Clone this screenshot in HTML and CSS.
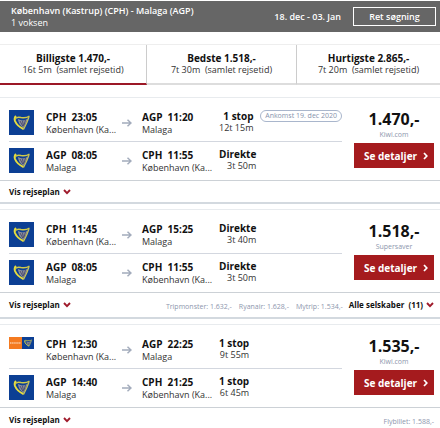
FILE: index.html
```
<!DOCTYPE html>
<html lang="da">
<head>
<meta charset="utf-8">
<meta name="viewport" content="width=device-width, initial-scale=1">
<title>København - Malaga</title>
<link rel="stylesheet" href="styles.css">
</head>
<body>
<svg class="defs" aria-hidden="true">
  <symbol id="harp" viewBox="0 0 25 25">
    <rect width="25" height="25" fill="#0c3f94"/>
    <path d="M9 9 Q14 12 19 8.500 L14.500 18 Q9 14 9 9Z" fill="#8d8f9c"/>
    <path d="M11 11 L14 16.500 M13.500 11 L14.500 16 M16.500 10 L15 15" stroke="#3c3f68" stroke-width=".8"/>
    <path d="M7 8.500 Q8 6.500 12 7.500 Q17 8.500 20.500 6" fill="none" stroke="#cfc94a" stroke-width="1.500"/>
    <path d="M7 6 Q5 8 6 11 Q8 16 14.500 19" fill="none" stroke="#e6dc3e" stroke-width="2"/>
    <path d="M20 7 Q18 13 14.500 19.500" fill="none" stroke="#c9c25a" stroke-width="1.300"/>
  </symbol>
  <symbol id="arrow" viewBox="0 0 10 8">
    <path d="M0 4H9M5.500 .8L9 4L5.500 7.200" fill="none" stroke="#a3acbc" stroke-width="1.500"/>
  </symbol>
  <symbol id="down" viewBox="0 0 8 6">
    <path d="M1 1L4 4.200L7 1" fill="none" stroke="#9f1a2b" stroke-width="1.900"/>
  </symbol>
  <symbol id="right" viewBox="0 0 5 8">
    <path d="M1 1L3.800 4L1 7" fill="none" stroke="#fff" stroke-width="1.700"/>
  </symbol>
</svg>

<header class="bar">
  <div class="trip">
    <h1>København (Kastrup) (CPH) - Malaga (AGP)</h1>
    <p>1 voksen</p>
  </div>
  <span class="dates">18. dec - 03. Jan</span>
  <button class="edit" type="button">Ret søgning</button>
</header>

<nav class="tabs">
  <button class="tab active" type="button"><b>Billigste 1.470,-</b><span>16t 5m &nbsp;(samlet rejsetid)</span></button>
  <button class="tab" type="button"><b>Bedste 1.518,-</b><span>7t 30m &nbsp;(samlet rejsetid)</span></button>
  <button class="tab" type="button"><b>Hurtigste 2.865,-</b><span>7t 20m &nbsp;(samlet rejsetid)</span></button>
</nav>

<main>
  <article class="card">
    <div class="offer">
      <div class="legs">
        <div class="leg">
          <svg class="logo"><use href="#harp"/></svg>
          <div class="stop"><b>CPH &nbsp;23:05</b><span>København (Ka...</span></div>
          <svg class="arrow"><use href="#arrow"/></svg>
          <div class="stop"><b>AGP &nbsp;11:20</b><span>Malaga</span></div>
          <div class="time"><b>1 stop</b><span>12t 15m</span></div>
          <span class="badge">Ankomst 19. dec 2020</span>
        </div>
        <div class="leg">
          <svg class="logo"><use href="#harp"/></svg>
          <div class="stop"><b>AGP &nbsp;08:05</b><span>Malaga</span></div>
          <svg class="arrow"><use href="#arrow"/></svg>
          <div class="stop"><b>CPH &nbsp;11:55</b><span>København (Ka...</span></div>
          <div class="time"><b>Direkte</b><span>3t 50m</span></div>
        </div>
      </div>
      <div class="price">
        <strong>1.470,-</strong><small>Kiwi.com</small>
        <a class="details" href="#">Se detaljer<svg><use href="#right"/></svg></a>
      </div>
    </div>
    <footer class="foot">
      <button class="toggle" type="button">Vis rejseplan<svg><use href="#down"/></svg></button>
    </footer>
  </article>

  <article class="card">
    <div class="offer">
      <div class="legs">
        <div class="leg">
          <svg class="logo"><use href="#harp"/></svg>
          <div class="stop"><b>CPH &nbsp;11:45</b><span>København (Ka...</span></div>
          <svg class="arrow"><use href="#arrow"/></svg>
          <div class="stop"><b>AGP &nbsp;15:25</b><span>Malaga</span></div>
          <div class="time"><b>Direkte</b><span>3t 40m</span></div>
        </div>
        <div class="leg">
          <svg class="logo"><use href="#harp"/></svg>
          <div class="stop"><b>AGP &nbsp;08:05</b><span>Malaga</span></div>
          <svg class="arrow"><use href="#arrow"/></svg>
          <div class="stop"><b>CPH &nbsp;11:55</b><span>København (Ka...</span></div>
          <div class="time"><b>Direkte</b><span>3t 50m</span></div>
        </div>
      </div>
      <div class="price">
        <strong>1.518,-</strong><small>Supersaver</small>
        <a class="details" href="#">Se detaljer<svg><use href="#right"/></svg></a>
      </div>
    </div>
    <footer class="foot tall">
      <button class="toggle" type="button">Vis rejseplan<svg><use href="#down"/></svg></button>
      <div class="others"><span>Tripmonster: 1.632,-</span><span>Ryanair: 1.628,-</span><span>Mytrip: 1.534,-</span></div>
      <button class="toggle" type="button">Alle selskaber &nbsp;(11)<svg><use href="#down"/></svg></button>
    </footer>
  </article>

  <article class="card">
    <div class="offer">
      <div class="legs">
        <div class="leg">
          <svg class="logo" viewBox="0 0 25 25">
            <rect width="13" height="12" fill="#f47a20"/>
            <path d="M1 6H12" stroke="#fbc9a0" stroke-width="1.500" stroke-dasharray="1.500 .6"/>
            <use href="#harp" x="13" width="12" height="12"/>
          </svg>
          <div class="stop"><b>CPH &nbsp;12:30</b><span>København (Ka...</span></div>
          <svg class="arrow"><use href="#arrow"/></svg>
          <div class="stop"><b>AGP &nbsp;22:25</b><span>Malaga</span></div>
          <div class="time"><b>1 stop</b><span>9t 55m</span></div>
        </div>
        <div class="leg">
          <svg class="logo"><use href="#harp"/></svg>
          <div class="stop"><b>AGP &nbsp;14:40</b><span>Malaga</span></div>
          <svg class="arrow"><use href="#arrow"/></svg>
          <div class="stop"><b>CPH &nbsp;21:25</b><span>København (Ka...</span></div>
          <div class="time"><b>1 stop</b><span>6t 45m</span></div>
        </div>
      </div>
      <div class="price">
        <strong>1.535,-</strong><small>Kiwi.com</small>
        <a class="details" href="#">Se detaljer<svg><use href="#right"/></svg></a>
      </div>
    </div>
    <footer class="foot tall">
      <button class="toggle" type="button">Vis rejseplan<svg><use href="#down"/></svg></button>
      <div class="others last"><span>Flybillet: 1.588,-</span></div>
    </footer>
  </article>
</main>
</body>
</html>
```
FILE: styles.css
```
* { box-sizing: border-box; }
body {
  margin: 0;
  padding-top: 1px;
  overflow: hidden;
  background: #fff;
  color: #111;
  font-family: "Open Sans", sans-serif;
  font-size: 10px;
  line-height: 12px;
}
button { font: inherit; color: inherit; cursor: pointer; }
h1, p { margin: 0; }
.defs { position: absolute; width: 0; height: 0; }

.bar {
  display: flex;
  align-items: center;
  height: 31px;
  padding: 0 4px 0 11px;
  background: #666;
  color: #fff;
}
.trip { flex: 1; white-space: nowrap; }
.trip h1 { font-size: 9px; line-height: 12px; font-weight: 600; }
.trip p { font-size: 9px; line-height: 12px; }
.dates { font-size: 9px; font-weight: 600; margin-right: 12px; }
.edit {
  width: 83px;
  height: 19px;
  padding: 0;
  border: 1px solid #fff;
  background: none;
  font-size: 9px;
  font-weight: 600;
}

.tabs {
  display: grid;
  grid-template-columns: 147fr 150fr 143fr;
  margin-top: 12px;
  border-top: 1px solid #eee;
}
.tab {
  height: 40px;
  padding: 0;
  border: 0;
  border-right: 1px solid #ccc;
  border-bottom: 2px solid #ddd;
  background: none;
  text-align: center;
}
.tab:last-child { border-right: 0; }
.tab.active { border-bottom-color: #9c1826; }
.tab b, .tab span { display: block; }
.tab b { font-size: 10px; }
.tab span { font-size: 9px; line-height: 12px; color: #333; }

main { display: grid; gap: 5px; margin-top: 12px; }
.card { border-top: 1px solid #e8ebee; border-bottom: 2px solid #d3d9df; }
.card:last-child { border-bottom: 0; }
.offer { display: flex; gap: 12px; padding: 6px 6px 0 9px; border-bottom: 1px solid #ccd1d6; }
.legs { flex: 1; }
.leg {
  display: grid;
  grid-template-columns: 25px 76px 14px 71px auto 1fr;
  column-gap: 6px;
  height: 37px;
  padding-top: 6px;
}
.leg + .leg { height: 39px; border-top: 1px solid #d3d7df; }
.logo { width: 25px; height: 25px; }
.leg .stop:nth-child(2) { margin-left: 6px; }
.arrow { width: 10px; height: 8px; margin-top: 9px; }
.stop, .time { white-space: nowrap; }
.stop b, .stop span, .time b, .time span { display: block; }
.stop b { line-height: 14px; }
.stop span, .time span { font-size: 9px; line-height: 12px; color: #333; }
.time { text-align: right; }
.time b { line-height: 12px; }
.badge {
  justify-self: end;
  height: 12px;
  padding: 0 4px;
  border: 1px solid #a9b6cc;
  border-radius: 6px;
  color: #8793ad;
  font-size: 7px;
  line-height: 10px;
  white-space: nowrap;
}
.price { width: 80px; padding-top: 4px; text-align: center; }
.price strong, .price small { display: block; }
.price strong { font-size: 16px; line-height: 22px; }
.price small { font-size: 7px; line-height: 10px; color: #8d96ad; }
.details {
  display: flex;
  align-items: center;
  justify-content: center;
  gap: 6px;
  height: 25px;
  margin-top: 3px;
  padding-left: 4px;
  background: #a51b1e;
  color: #fff;
  font-weight: 700;
  text-decoration: none;
}
.details svg { width: 5px; height: 8px; }

.foot { display: flex; align-items: center; height: 21px; padding: 0 6px 0 9px; }
.foot.tall { height: 24px; }
.toggle {
  display: flex;
  align-items: center;
  gap: 3px;
  padding: 0;
  border: 0;
  background: none;
  font-size: 8px;
  font-weight: 700;
  white-space: nowrap;
}
.toggle svg { width: 8px; height: 6px; }
.others {
  display: flex;
  flex: 1;
  justify-content: flex-end;
  gap: 7px;
  padding: 4px 6px 0 0;
  color: #8d96ad;
  font-size: 7px;
  white-space: nowrap;
}
.others.last { padding-right: 0; }
```
